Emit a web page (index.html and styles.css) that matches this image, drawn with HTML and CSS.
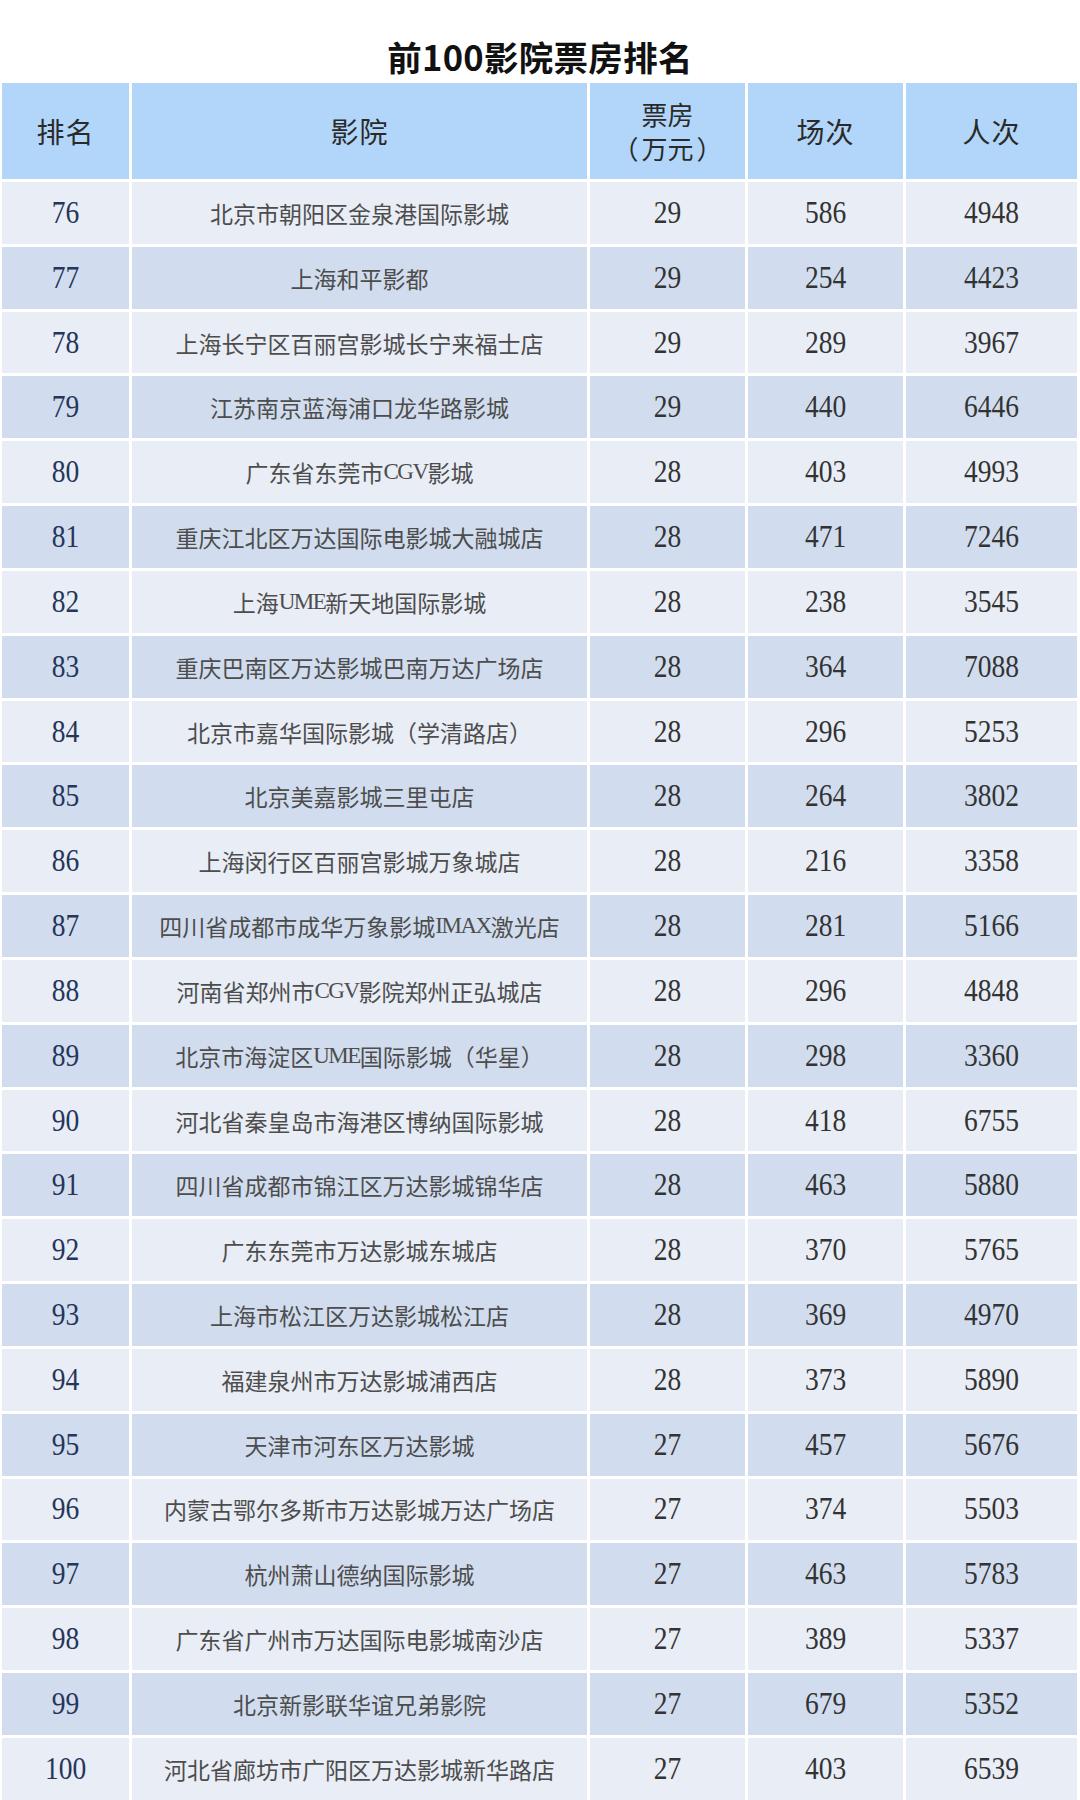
FILE: index.html
```html
<!DOCTYPE html>
<html lang="zh-CN">
<head>
<meta charset="utf-8">
<title>前100影院票房排名</title>
<link rel="stylesheet" href="styles.css">
</head>
<body>
<div class="page">
  <h1 class="title">前100影院票房排名</h1>
  <div class="table">
    <div class="cell head">排名</div>
    <div class="cell head">影院</div>
    <div class="cell head two"><span>票房</span><span><span class="pl">（</span>万元<span class="pr">）</span></span></div>
    <div class="cell head">场次</div>
    <div class="cell head">人次</div>

    <div class="cell odd"><span class="num rank">76</span></div><div class="cell odd name">北京市朝阳区金泉港国际影城</div><div class="cell odd"><span class="num">29</span></div><div class="cell odd"><span class="num">586</span></div><div class="cell odd"><span class="num">4948</span></div>
    <div class="cell even"><span class="num rank">77</span></div><div class="cell even name">上海和平影都</div><div class="cell even"><span class="num">29</span></div><div class="cell even"><span class="num">254</span></div><div class="cell even"><span class="num">4423</span></div>
    <div class="cell odd"><span class="num rank">78</span></div><div class="cell odd name">上海长宁区百丽宫影城长宁来福士店</div><div class="cell odd"><span class="num">29</span></div><div class="cell odd"><span class="num">289</span></div><div class="cell odd"><span class="num">3967</span></div>
    <div class="cell even"><span class="num rank">79</span></div><div class="cell even name">江苏南京蓝海浦口龙华路影城</div><div class="cell even"><span class="num">29</span></div><div class="cell even"><span class="num">440</span></div><div class="cell even"><span class="num">6446</span></div>
    <div class="cell odd"><span class="num rank">80</span></div><div class="cell odd name">广东省东莞市<span class="lat">CGV</span>影城</div><div class="cell odd"><span class="num">28</span></div><div class="cell odd"><span class="num">403</span></div><div class="cell odd"><span class="num">4993</span></div>
    <div class="cell even"><span class="num rank">81</span></div><div class="cell even name">重庆江北区万达国际电影城大融城店</div><div class="cell even"><span class="num">28</span></div><div class="cell even"><span class="num">471</span></div><div class="cell even"><span class="num">7246</span></div>
    <div class="cell odd"><span class="num rank">82</span></div><div class="cell odd name">上海<span class="lat">UME</span>新天地国际影城</div><div class="cell odd"><span class="num">28</span></div><div class="cell odd"><span class="num">238</span></div><div class="cell odd"><span class="num">3545</span></div>
    <div class="cell even"><span class="num rank">83</span></div><div class="cell even name">重庆巴南区万达影城巴南万达广场店</div><div class="cell even"><span class="num">28</span></div><div class="cell even"><span class="num">364</span></div><div class="cell even"><span class="num">7088</span></div>
    <div class="cell odd"><span class="num rank">84</span></div><div class="cell odd name">北京市嘉华国际影城（学清路店）</div><div class="cell odd"><span class="num">28</span></div><div class="cell odd"><span class="num">296</span></div><div class="cell odd"><span class="num">5253</span></div>
    <div class="cell even"><span class="num rank">85</span></div><div class="cell even name">北京美嘉影城三里屯店</div><div class="cell even"><span class="num">28</span></div><div class="cell even"><span class="num">264</span></div><div class="cell even"><span class="num">3802</span></div>
    <div class="cell odd"><span class="num rank">86</span></div><div class="cell odd name">上海闵行区百丽宫影城万象城店</div><div class="cell odd"><span class="num">28</span></div><div class="cell odd"><span class="num">216</span></div><div class="cell odd"><span class="num">3358</span></div>
    <div class="cell even"><span class="num rank">87</span></div><div class="cell even name">四川省成都市成华万象影城<span class="lat">IMAX</span>激光店</div><div class="cell even"><span class="num">28</span></div><div class="cell even"><span class="num">281</span></div><div class="cell even"><span class="num">5166</span></div>
    <div class="cell odd"><span class="num rank">88</span></div><div class="cell odd name">河南省郑州市<span class="lat">CGV</span>影院郑州正弘城店</div><div class="cell odd"><span class="num">28</span></div><div class="cell odd"><span class="num">296</span></div><div class="cell odd"><span class="num">4848</span></div>
    <div class="cell even"><span class="num rank">89</span></div><div class="cell even name">北京市海淀区<span class="lat">UME</span>国际影城（华星）</div><div class="cell even"><span class="num">28</span></div><div class="cell even"><span class="num">298</span></div><div class="cell even"><span class="num">3360</span></div>
    <div class="cell odd"><span class="num rank">90</span></div><div class="cell odd name">河北省秦皇岛市海港区博纳国际影城</div><div class="cell odd"><span class="num">28</span></div><div class="cell odd"><span class="num">418</span></div><div class="cell odd"><span class="num">6755</span></div>
    <div class="cell even"><span class="num rank">91</span></div><div class="cell even name">四川省成都市锦江区万达影城锦华店</div><div class="cell even"><span class="num">28</span></div><div class="cell even"><span class="num">463</span></div><div class="cell even"><span class="num">5880</span></div>
    <div class="cell odd"><span class="num rank">92</span></div><div class="cell odd name">广东东莞市万达影城东城店</div><div class="cell odd"><span class="num">28</span></div><div class="cell odd"><span class="num">370</span></div><div class="cell odd"><span class="num">5765</span></div>
    <div class="cell even"><span class="num rank">93</span></div><div class="cell even name">上海市松江区万达影城松江店</div><div class="cell even"><span class="num">28</span></div><div class="cell even"><span class="num">369</span></div><div class="cell even"><span class="num">4970</span></div>
    <div class="cell odd"><span class="num rank">94</span></div><div class="cell odd name">福建泉州市万达影城浦西店</div><div class="cell odd"><span class="num">28</span></div><div class="cell odd"><span class="num">373</span></div><div class="cell odd"><span class="num">5890</span></div>
    <div class="cell even"><span class="num rank">95</span></div><div class="cell even name">天津市河东区万达影城</div><div class="cell even"><span class="num">27</span></div><div class="cell even"><span class="num">457</span></div><div class="cell even"><span class="num">5676</span></div>
    <div class="cell odd"><span class="num rank">96</span></div><div class="cell odd name">内蒙古鄂尔多斯市万达影城万达广场店</div><div class="cell odd"><span class="num">27</span></div><div class="cell odd"><span class="num">374</span></div><div class="cell odd"><span class="num">5503</span></div>
    <div class="cell even"><span class="num rank">97</span></div><div class="cell even name">杭州萧山德纳国际影城</div><div class="cell even"><span class="num">27</span></div><div class="cell even"><span class="num">463</span></div><div class="cell even"><span class="num">5783</span></div>
    <div class="cell odd"><span class="num rank">98</span></div><div class="cell odd name">广东省广州市万达国际电影城南沙店</div><div class="cell odd"><span class="num">27</span></div><div class="cell odd"><span class="num">389</span></div><div class="cell odd"><span class="num">5337</span></div>
    <div class="cell even"><span class="num rank">99</span></div><div class="cell even name">北京新影联华谊兄弟影院</div><div class="cell even"><span class="num">27</span></div><div class="cell even"><span class="num">679</span></div><div class="cell even"><span class="num">5352</span></div>
    <div class="cell odd"><span class="num rank">100</span></div><div class="cell odd name">河北省廊坊市广阳区万达影城新华路店</div><div class="cell odd"><span class="num">27</span></div><div class="cell odd"><span class="num">403</span></div><div class="cell odd"><span class="num">6539</span></div>
  </div>
</div>
</body>
</html>
```

FILE: styles.css
```css
html, body {
  margin: 0;
  padding: 0;
  background: #ffffff;
}

.page {
  width: 1080px;
  height: 1800px;
  overflow: hidden;
  background: #ffffff;
}

.title {
  margin: 0;
  box-sizing: border-box;
  height: 83px;
  padding-top: 38px;
  font-family: "Noto Sans CJK SC", "Noto Sans", sans-serif;
  font-weight: 700;
  font-size: 34.5px;
  line-height: 36px;
  letter-spacing: 0.3px;
  text-align: center;
  color: #111111;
}

.table {
  display: grid;
  grid-template-columns: 127px 455px 155px 155px 171px;
  grid-template-rows: 96px;
  grid-auto-rows: 61.83px;
  gap: 3px;
  margin-left: 2px;
}

.cell {
  display: flex;
  align-items: center;
  justify-content: center;
  font-family: "Liberation Serif", "Noto Sans CJK SC", serif;
  color: #333333;
  white-space: nowrap;
}

.head {
  background: #b2d6f9;
  font-family: "Noto Sans CJK SC", sans-serif;
  font-size: 28px;
  letter-spacing: 1px;
  color: #2a2a2a;
}

.head.two {
  flex-direction: column;
  font-size: 26px;
  line-height: 34px;
  letter-spacing: 0;
}

.pl,
.pr {
  display: inline-block;
  width: 26px;
}

.pl {
  text-align: right;
  margin-right: 3px;
}

.pr {
  text-align: left;
  margin-left: 3px;
}

.odd {
  background: #e9edf6;
}

.even {
  background: #d1ddee;
}

.name {
  font-family: "Noto Sans CJK SC", sans-serif;
  font-size: 23px;
  color: #4d4d4d;
}

.lat {
  font-family: "Liberation Serif", serif;
  font-size: 23px;
  letter-spacing: -1.5px;
}

.num {
  display: inline-block;
  font-family: "Liberation Serif", serif;
  font-size: 27.5px;
  color: #333333;
  transform: scaleY(1.16);
}

.rank {
  color: #26355a;
}
```
